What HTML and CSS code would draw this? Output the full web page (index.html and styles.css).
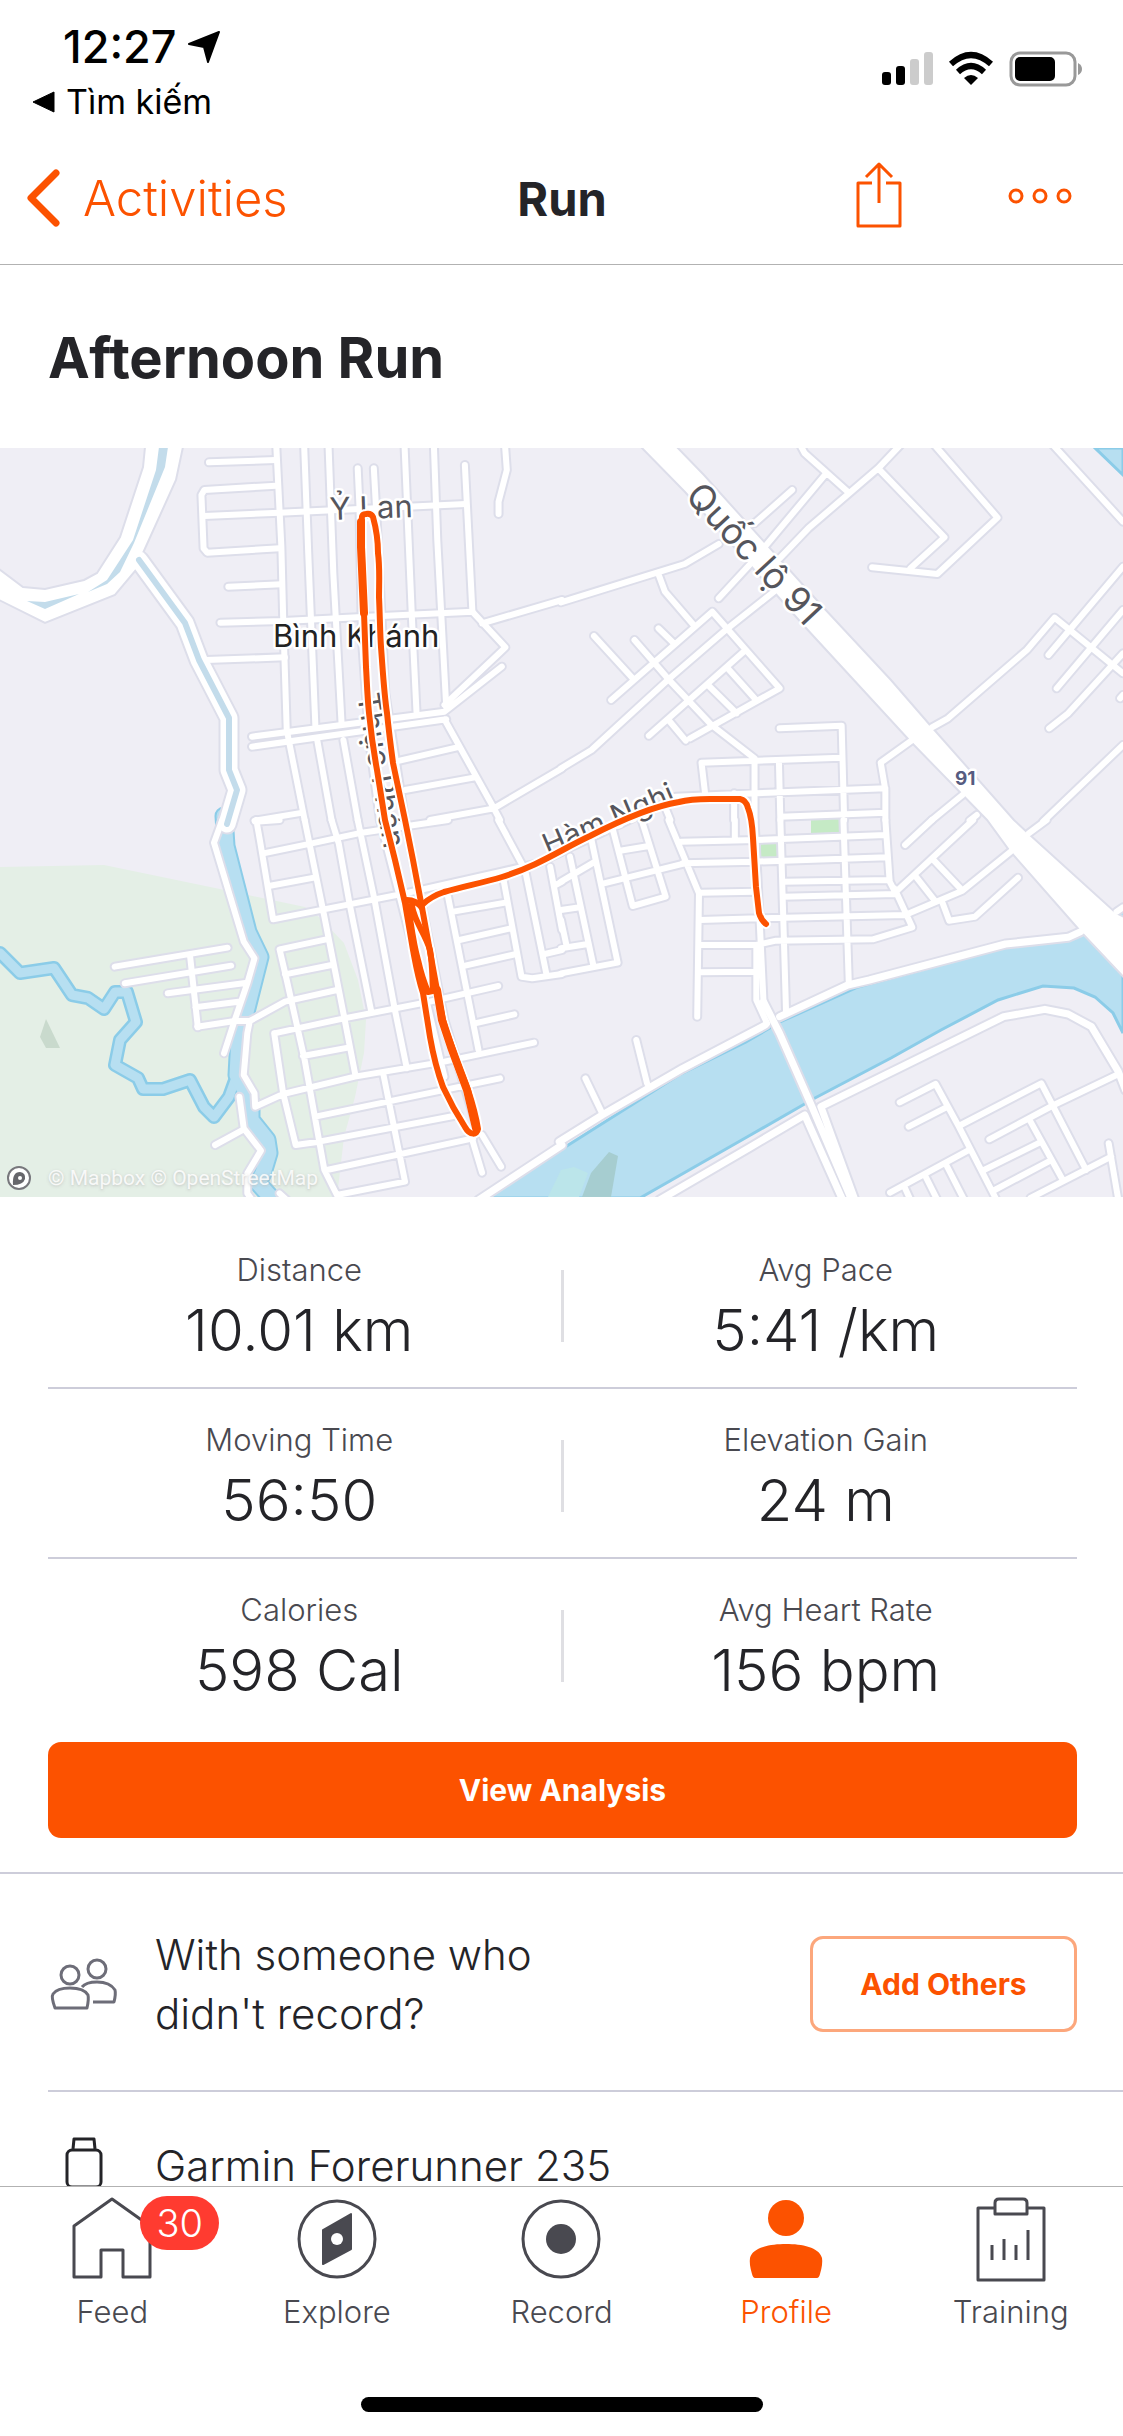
FILE: index.html
```html
<!DOCTYPE html>
<html lang="en">
<head>
    <meta charset="UTF-8">
    <meta name="viewport" content="width=device-width, initial-scale=1.0">
    <title>Afternoon Run</title>
    <link rel="stylesheet" href="styles.css">
</head>
<body>
    <div class="status-bar">
        <div class="status-left">
            <div class="clock">
                <span>12:27</span>
                <svg width="32" height="32" viewBox="0 0 32 32"><path d="M31 1 20 31 16 16 1 13Z" stroke="#000" stroke-width="2" stroke-linejoin="round"/></svg>
            </div>
            <a class="back-app" href="#">
                <svg width="24" height="22" viewBox="0 0 24 22"><path d="M1 11 22 1V21Z" stroke="#000" stroke-linejoin="round"/></svg>
                <span>Tìm kiếm</span>
            </a>
        </div>
        <svg class="status-icons" width="202" height="36" viewBox="0 0 202 36">
            <rect x="1" y="21" width="9" height="13" rx="3"/>
            <rect x="15" y="15" width="9" height="19" rx="3"/>
            <rect x="29" y="8" width="9" height="26" rx="3" fill="#ccc"/>
            <rect x="43" y="1" width="9" height="33" rx="3" fill="#ccc"/>
            <g fill="none" stroke="#000" stroke-width="6">
                <path d="M70 13Q90-5 110 13"/>
                <path d="M77 21Q90 9 103 21"/>
            </g>
            <path d="M83 27Q90 21 97 27L90 34Z"/>
            <rect x="130" y="2" width="64" height="32" rx="9" fill="none" stroke="#999" stroke-width="3"/>
            <rect x="134" y="6" width="40" height="24" rx="5"/>
            <path d="M197 12Q201 14 201 18Q201 22 197 24Z" fill="#999"/>
        </svg>
    </div>

    <header class="nav-bar">
        <a class="back" href="#">
            <svg width="36" height="60" viewBox="0 0 36 60"><path d="M31 5 6 30 31 55" fill="none" stroke="#fc5200" stroke-width="7" stroke-linecap="round" stroke-linejoin="round"/></svg>
            <span>Activities</span>
        </a>
        <h2>Run</h2>
        <div class="nav-actions">
            <button aria-label="Share">
                <svg width="48" height="72" viewBox="0 0 48 72" fill="none" stroke="#fc5200" stroke-width="3" stroke-linejoin="round">
                    <path d="M17 21H3V64H45V21H31M24 41V3M11 15 24 2 37 15"/>
                </svg>
            </button>
            <button aria-label="More">
                <svg width="66" height="22" viewBox="0 0 66 22" fill="none" stroke="#fc5200" stroke-width="3">
                    <circle cx="9" cy="9" r="6"/><circle cx="33" cy="9" r="6"/><circle cx="57" cy="9" r="6"/>
                </svg>
            </button>
        </div>
    </header>

    <main>
        <h1>Afternoon Run</h1>

        <svg class="map" viewBox="0 0 1123 749" role="img" aria-label="Route map">
            <defs>
                <!-- streets, one group per map tile -->
                <g id="streets">
                    <g transform="translate(0 -8) scale(.35842 .33333)">
                        <path d="M770 0 785 320 790 530 800 870 850 1140M848 0 860 340 870 600 880 860M885 900 925 1140M916 0 930 400 953 850M958 900 998 1140M998 85 1003 200 1010 600 1030 900 1060 1140M1043 85 1050 220 1075 760 1130 1140M1128 0 1140 300 1150 550 1162 815M1210 0 1220 300 1245 800M1297 75 1318 515M1408 0 1414 90 1391 185V222"/>
                        <path d="M583 67 770 60M770 137 570 150 562 165 568 325 578 338 780 325M570 228 780 218 1300 192M637 440 785 433M615 548 790 543 1080 527 1318 515 1410 622 1240 795M1345 550 1568 480M575 660 795 652M703 890 1240 815 1400 680M703 920 1245 838M1240 838 1378 1105 1395 1140M1115 962 1275 922M1130 1050 1325 1012M1568 985 1378 1105 1200 1140M710 1142 845 1118"/>
                    </g>
                    <g transform="translate(561 -8) scale(.35842 .33333)">
                        <path d="M0 487 270 397 345 372 440 312M540 250 645 150M440 475 530 370 740 100M660 0 680 40 800 155M960 0 885 85 690 265 610 355M600 450 465 565 300 718 85 930 0 985M885 85 1070 292 975 385M1030 0 1218 233 1050 402 868 382M1360 0 1568 245M270 397 290 455 370 555"/>
                        <path d="M140 780 422 515 610 745 360 895M92 588 200 715M205 600 300 718 420 855 540 955M272 565 315 610M245 887 515 630M465 685 540 775M410 735 490 820M300 840 348 902M610 865 783 857 790 1140M392 968 780 953M392 968 402 1060M540 960V1140M608 965 612 1140M320 1070 545 1060 905 1045M612 1130 905 1118M980 900 892 968 905 1050V1140M483 1060V1140M290 1100 305 1140"/>
                        <path d="M1035 862 1080 835 1300 630 1377 533 1568 700M1568 380 1360 645M1568 510 1383 745M1568 640 1415 820 1362 865M1568 765 1560 775M1568 915 1345 1145M1120 1065 1035 1140M1160 1125 1140 1142"/>
                    </g>
                    <g transform="translate(0 372) scale(.35842 .33333)">
                        <path d="M715 0 725 60 762 298 1130 220 1400 155 1500 130 1568 95M712 5 780 0M850 0 905 290 960 590 992 768M925 0 945 70 975 250 1035 570M998 0 1045 240 1100 560 1135 745M1060 0 1185 520 1240 770M1130 0 1240 600 1330 920M735 100 870 70 1010 38 1250 0M750 198 880 172M910 358 780 388 800 480 850 720 905 1050 940 1125 1130 1085 1070 765M795 463 925 435M550 620 655 603 697 603 795 545 940 510M765 640 960 595 1200 545 1390 498M765 640 790 820 825 975 890 965 1280 885M845 708 975 682M697 603 690 640 680 765 710 820 712 860 790 822 990 770 1240 725 1490 668M880 890 1395 775M912 1050 1320 955"/>
                        <path d="M640 0 620 0 597 68 680 365 710 415 690 490 655 600 625 700M320 440 635 383M348 490 645 437M468 520 690 488M530 405 552 622M545 562 665 545M668 830 680 925 728 992 690 1060V1120L710 1150M600 975 680 928M780 1120 800 1140"/>
                        <path d="M1250 230 1335 690M1265 275 1410 248M1282 360 1425 325M1298 437 1440 402M1405 180 1455 470 1485 475 1568 462M1325 610 1435 583M1390 0 1465 150 1525 465M1535 140 1568 330M1520 402 1568 390M1550 195 1568 185M1315 950 1345 1058M1345 945 1398 1040"/>
                    </g>
                    <g transform="translate(561 372) scale(.35842 .33333)">
                        <path d="M540 0 555 320 565 545M485 0V55M335 65 545 60 905 45M340 130 540 125 910 112M300 0 385 220 380 590M390 218 540 215M388 300 550 295 960 285M385 375 545 375 600 362 870 358 980 322 930 205M385 457 550 455M545 380V540L575 610M612 0 628 580M788 0 803 490M905 0 917 185 935 222M620 185 917 180M620 230 935 222M935 215 1150 0M1035 0 960 75M960 285 1120 212 1260 90M1035 115 1120 212M990 170 1045 245M1065 250 1083 302 1155 290 1275 173M1305 40 1355 0M1550 275 1568 262"/>
                        <path d="M0 95 320 -65M0 185 95 125M25 110 90 435M85 60 158 428 0 460M0 270 52 262M0 385 75 372M0 300 15 375M120 190 345 130M145 30 200 258 292 230 225 0M165 92 245 78M210 660 240 790M68 775 115 880"/>
                        <path d="M945 847 1045 792 1110 920 1220 1150M970 920 1075 862M1110 918 1340 790 1465 1050M1550 765 1375 855 1195 958M1310 905 1400 1080M1335 968 1180 1050M1360 1025 1210 1110M1310 1134 1535 1010M1528 970 1555 1140M918 1118 1135 992M1075 1035 1125 1140M1015 1065 1050 1140M958 1100 975 1140"/>
                    </g>
                </g>
                <!-- wider roads along the river and over the bridge -->
                <g id="roads">
                    <g transform="translate(0 372) scale(.35842 .33333)">
                        <path d="M1335 1140 1568 975"/>
                    </g>
                    <g transform="translate(561 372) scale(.35842 .33333)">
                        <path d="M-5 965 115 885 340 745 570 615M610 590 800 495 860 480 1240 372 1415 352 1450 335M275 1140 530 980 680 885 790 1150M820 1140 725 860 1235 590 1350 568 1415 582 1480 620 1555 755 1575 810M565 545 610 640 700 860 815 1150"/>
                    </g>
                </g>
                <path id="canal" d="M139 112 185 175 199 212 229 270V322L237 342 227 376"/>
                <path id="creek" d="M0 505 20 525 54 520 72 547 88 550 104 561 115 544 127 544 136 574 120 592 115 617 138 630 143 641 163 641 190 632 204 659 214 669 229 649 237 627 236 579"/>
                <path id="stream" d="M224 368 226 398 248 484 260 509 244 572 239 590 237 627 251 655V672L267 692 269 705 263 725 258 735 276 755"/>
                <g id="route">
                    <path d="M423 456Q432 448 444 444C465 438 482 435 502 429 540 417 560 402 590 388 625 370 655 358 679 354Q690 351 710 351H740Q746 352 748 360 752 370 753 390L756 439 759 465Q761 472 766 476"/>
                    <path d="M362 72Q361 66 366 66 371 65 373 69C376 80 378 92 378 105 380 120 379 135 379 149 380 170 380 185 381 199 383 225 384 245 387 265 389 285 391 300 393 315L405 372 413 412 423 465 437 542 443 572C446 585 449 590 452 599 458 618 463 628 468 642 473 657 476 668 478 681 477 687 470 688 465 679 456 665 449 652 443 639 436 620 433 606 430 589L423 545C418 530 416 518 413 502L405 455 395 412 385 372 377 322C373 300 371 285 369 265 367 245 367 235 366 219L364 165C363 135 361 110 362 72Z"/>
                    <path d="M407 452Q416 452 422 460M412 458C415 475 425 485 430 502 433 520 432 530 433 542M408 458C411 475 413 495 418 512Q422 530 428 544L437 542"/>
                    <path class="heavy" d="M361 74V99L364 165M437 542 442 572 451 599 467 642 476 680"/>
                </g>
            </defs>

            <rect width="1123" height="749" fill="#efeef5"/>
            <path d="M0 419 104 417 215 440 305 459 319 469 344 495 358 532 366 572 364 605 355 649 344 689 337 749H0Z" fill="#e4efe6"/>
            <path d="M46 571 60 600H46L40 589Z" fill="#c9dacd"/>
            <path d="M811 367H840V387H811ZM761 395H778V410H761Z" fill="#c5eac5"/>

            <use href="#creek" class="shore"/>
            <use href="#stream" class="shore stream"/>
            <use href="#creek" class="water"/>
            <use href="#stream" class="water stream"/>
            <g class="river">
                <path d="M487 750 562 701 679 627 746 594 780 574 858 539 1005 499 1068 492 1084 485 1123 527V585L1113 565 1095 549 1074 540 1043 538 998 552 941 582 891 610 815 650 747 689 640 750Z"/>
                <path d="M1095 0H1123V27ZM1116 465 1130 460V480Z"/>
            </g>
            <path d="M561 722 574 719 588 725 579 749H548Z" fill="#bbe5ea"/>
            <path d="M591 725 609 704 618 708 611 749H582Z" fill="#a6cdd0"/>

            <use href="#streets" class="casing"/>
            <use href="#roads" class="casing wide"/>
            <use href="#canal" class="casing canal"/>
            <g class="trunk">
                <path d="M145-1 143 19 120 89 97 125 84 132 45 141 23 139-1 121V152L45 175 115 147 136 122 143 105 176 32 183-1Z"/>
                <path d="M637-5 685 44 805 179 909 292 987 372 1009 402 1081 484 1130 536V472L1116 465 1030 387 1014 372 930 277 891 232 823 159 704 27 673-5Z"/>
            </g>
            <use href="#streets" class="street"/>
            <use href="#roads" class="street wide"/>
            <use href="#canal" class="street canal"/>
            <use href="#canal" class="canal-water"/>
            <path d="M159-1H168L165 19 134 95 120 124 107 136 88 144 107 132 133 92 156 22ZM27 153 45 154 79 146 45 161Z" fill="#c3dceb"/>

            <g class="labels">
                <text x="330" y="72" transform="rotate(-2 330 72)" font-size="31">Ỷ Lan</text>
                <text x="273" y="199" font-size="31" fill="#222">Bình Khánh</text>
                <text x="684" y="49" transform="rotate(47 684 49)" font-size="36">Quốc lộ 91</text>
                <text x="548" y="408" transform="rotate(-23 548 408)" font-size="30">Hàm Nghi</text>
                <text x="357" y="247" transform="rotate(80 357 247)" font-size="31">Thục Phán</text>
                <text x="955" y="337" font-size="19" font-weight="700" fill="#565b80">91</text>
            </g>

            <use href="#route" class="route-halo"/>
            <use href="#route" class="route"/>

            <circle cx="19" cy="730" r="11" fill="#fff" stroke="#77777c" stroke-width="2"/>
            <path d="M13 737Q12 724 20 724 26 725 25 731 23 737 13 737Z" fill="#66666b"/>
            <circle cx="20" cy="730" r="2" fill="#fff"/>
            <text class="attribution" x="48" y="737">© Mapbox © OpenStreetMap</text>
        </svg>

        <dl class="stats">
            <div><dt>Distance</dt><dd>10.01 km</dd></div>
            <div><dt>Avg Pace</dt><dd>5:41 /km</dd></div>
            <div><dt>Moving Time</dt><dd>56:50</dd></div>
            <div><dt>Elevation Gain</dt><dd>24 m</dd></div>
            <div><dt>Calories</dt><dd>598 Cal</dd></div>
            <div><dt>Avg Heart Rate</dt><dd>156 bpm</dd></div>
        </dl>

        <div class="analysis">
            <button class="btn-primary">View Analysis</button>
        </div>

        <section class="others">
            <svg width="72" height="56" viewBox="0 0 72 56" fill="none" stroke="#6d6d78" stroke-width="3" stroke-linejoin="round">
                <circle cx="22" cy="19" r="9"/>
                <circle cx="49" cy="13" r="9"/>
                <path d="M7 52Q3 41 5 38 9 32 22 32 36 32 40 39 41 43 39 52Z"/>
                <path d="M34 31Q38 26 49 26 62 26 67 34 68 38 66 46H45"/>
            </svg>
            <p>With someone who didn't record?</p>
            <button class="btn-outline">Add Others</button>
        </section>

        <section class="gear">
            <svg width="72" height="60" viewBox="0 0 72 60" fill="none" stroke="#242428" stroke-width="3" stroke-linejoin="round">
                <rect x="19" y="15" width="34" height="37" rx="5"/>
                <path d="M25 14 26 4H46L47 14M25 53 26 59H46L47 53"/>
            </svg>
            <p>Garmin Forerunner 235</p>
        </section>
    </main>

    <footer class="tab-bar">
        <nav>
            <a href="#">
                <span class="tab-icon">
                    <svg width="80" height="86" viewBox="0 0 80 86" fill="none" stroke="#494950" stroke-width="3" stroke-linejoin="round"><path d="M2 30 40 3 78 30V81H51V54H29V81H2Z"/></svg>
                    <span class="badge">30</span>
                </span>
                Feed
            </a>
            <a href="#">
                <span class="tab-icon">
                    <svg width="80" height="86" viewBox="0 0 80 86"><circle cx="40" cy="43" r="38" fill="none" stroke="#494950" stroke-width="3"/><path d="M26 34 54 18V53L26 68Z" fill="#494950" stroke="#494950" stroke-width="2" stroke-linejoin="round"/><circle cx="40" cy="43" r="6" fill="#fff"/></svg>
                </span>
                Explore
            </a>
            <a href="#">
                <span class="tab-icon">
                    <svg width="80" height="86" viewBox="0 0 80 86"><circle cx="40" cy="43" r="38" fill="none" stroke="#494950" stroke-width="3"/><circle cx="40" cy="43" r="15" fill="#494950"/></svg>
                </span>
                Record
            </a>
            <a class="active" href="#">
                <span class="tab-icon">
                    <svg width="80" height="86" viewBox="0 0 80 86" fill="#fc5200"><circle cx="40" cy="22" r="18"/><path d="M9 82Q7 82 6 78 3 68 4 62C7 51 24 48 40 48S73 51 76 62Q77 68 74 78 73 82 71 82Z"/></svg>
                </span>
                Profile
            </a>
            <a href="#">
                <span class="tab-icon">
                    <svg width="80" height="86" viewBox="0 0 80 86" fill="none" stroke="#494950" stroke-width="3" stroke-linejoin="round"><path d="M24 12H7V84H73V12H56M24 18V7Q24 3 28 3H52Q56 3 56 7V18ZM21 49V64M33 43V64M45 49V64M57 34V64"/></svg>
                </span>
                Training
            </a>
        </nav>
        <div class="home-indicator"></div>
    </footer>
</body>
</html>
```

FILE: styles.css
```css
* {
    box-sizing: border-box;
}
body {
    font-family: Inter, "Liberation Sans", sans-serif;
    font-weight: 300;
    margin: 0;
    padding-bottom: 190px;
    background-color: #fff;
    color: #242428;
}
a {
    color: inherit;
    text-decoration: none;
}
button {
    padding: 0;
    border: 0;
    background: none;
    font-family: inherit;
    cursor: pointer;
}
svg {
    display: block;
    flex: none;
}
h1, h2, p, dl, dd {
    margin: 0;
}

/* status bar */
.status-bar {
    display: flex;
    justify-content: space-between;
    height: 132px;
    padding: 20px 40px 0 32px;
    color: #000;
}
.clock {
    display: flex;
    align-items: center;
    gap: 11px;
    padding-left: 31px;
    font-size: 45px;
    font-weight: 500;
    line-height: 54px;
}
.back-app {
    display: flex;
    align-items: center;
    gap: 10px;
    font-size: 34px;
    font-weight: 400;
    line-height: 56px;
}
.status-icons {
    margin-top: 31px;
}

/* navigation */
.nav-bar {
    display: grid;
    grid-template-columns: 1fr auto 1fr;
    align-items: center;
    height: 133px;
    padding: 0 50px 0 25px;
    border-bottom: 1px solid #b2b2b2;
}
.back {
    display: flex;
    align-items: center;
    gap: 22px;
    color: #fc5200;
    font-size: 49px;
}
.nav-bar h2 {
    font-size: 47px;
    font-weight: 700;
    padding-left: 26px;
}
.nav-actions {
    display: flex;
    justify-content: flex-end;
    align-items: center;
    gap: 104px;
}
h1 {
    padding: 50px 48px 46px;
    font-size: 56px;
    font-weight: 700;
    line-height: 87px;
}

/* map */
.map {
    width: 100%;
    height: auto;
}
.map use {
    fill: none;
    stroke-linecap: round;
    stroke-linejoin: round;
}
#streets path, #roads path {
    vector-effect: non-scaling-stroke;
}
.casing {
    stroke: #dddeea;
    stroke-width: 10px;
}
.casing.wide {
    stroke-width: 11px;
}
.casing.canal {
    stroke-width: 21px;
}
.street {
    stroke: #fff;
    stroke-width: 6px;
}
.street.wide {
    stroke-width: 7px;
}
.street.canal {
    stroke-width: 17px;
}
.canal-water {
    stroke: #c3dceb;
    stroke-width: 6px;
}
.trunk {
    fill: #fff;
    stroke: #dddeea;
    stroke-width: 2px;
}
.shore {
    stroke: #8bcce8;
    stroke-width: 14px;
}
.shore.stream {
    stroke-width: 19px;
}
.water {
    stroke: #b7dff1;
    stroke-width: 9px;
}
.water.stream {
    stroke-width: 15px;
}
.river {
    fill: #b7dff1;
    stroke: #8bcce8;
    stroke-width: 3px;
}
.labels {
    fill: #55555c;
    font-weight: 400;
    stroke: #fff;
    stroke-width: 5px;
    stroke-linejoin: round;
    paint-order: stroke;
}
.route {
    stroke: #fc5200;
    stroke-width: 6px;
}
.route-halo {
    stroke: #fff;
    stroke-width: 10px;
}
.heavy {
    stroke-width: 8px;
}
.attribution {
    font-family: Roboto, sans-serif;
    font-size: 21px;
    font-weight: 400;
    fill: #fff;
    fill-opacity: 0.85;
    text-shadow: 0 1px 3px #bbb;
}

/* stats */
.stats {
    display: grid;
    grid-template-columns: 1fr 1fr;
    margin: 22px 46px 0 48px;
    text-align: center;
}
.stats div {
    position: relative;
    height: 170px;
    padding: 31px 0 0 12px;
    border-bottom: 2px solid #cdcdda;
}
.stats div:nth-child(odd) {
    padding: 31px 12px 0 0;
}
.stats div:nth-last-child(-n+2) {
    border-bottom: 0;
}
/* short line between the two columns */
.stats div:nth-child(odd)::after {
    content: "";
    position: absolute;
    top: 51px;
    right: -1px;
    width: 3px;
    height: 72px;
    background-color: #dfdfe3;
}
dt {
    color: #494950;
    font-size: 31px;
    line-height: 40px;
}
dd {
    font-size: 58px;
    line-height: 80px;
}
.analysis {
    padding: 13px 46px 34px 48px;
    border-bottom: 2px solid #cdcdda;
}
.btn-primary, .btn-outline {
    height: 96px;
    border-radius: 13px;
    font-size: 30px;
    font-weight: 700;
}
.btn-primary {
    display: block;
    width: 100%;
    background-color: #fc5200;
    color: #fff;
}

/* rows */
.others, .gear {
    display: flex;
    align-items: center;
    gap: 35px;
    margin-left: 48px;
    font-size: 42px;
    line-height: 59px;
}
.others {
    height: 218px;
    padding: 3px 46px 0 0;
    border-bottom: 2px solid #cdcdda;
}
.others p {
    width: 420px;
}
.btn-outline {
    width: 267px;
    margin-left: auto;
    border: 3px solid #fca77c;
    color: #fc5200;
}
.gear {
    padding-top: 43px;
}

/* tabs */
.tab-bar {
    position: fixed;
    left: 0;
    right: 0;
    bottom: 0;
    height: 250px;
    border-top: 1px solid #b2b2b2;
    background-color: #fff;
}
.tab-bar nav {
    display: grid;
    grid-template-columns: repeat(5, 1fr);
    height: 210px;
    padding-top: 9px;
}
.tab-bar a {
    display: flex;
    flex-direction: column;
    align-items: center;
    gap: 10px;
    color: #494950;
    font-size: 31px;
    line-height: 40px;
}
.tab-bar a.active {
    color: #fc5200;
}
.tab-icon {
    position: relative;
}
.badge {
    position: absolute;
    left: 68px;
    top: 0;
    width: 79px;
    border-radius: 27px;
    background-color: #ff3b30;
    color: #fff;
    font-size: 38px;
    line-height: 54px;
    text-align: center;
}
.home-indicator {
    width: 402px;
    height: 15px;
    margin: 0 auto;
    border-radius: 8px;
    background-color: #000;
}
```
